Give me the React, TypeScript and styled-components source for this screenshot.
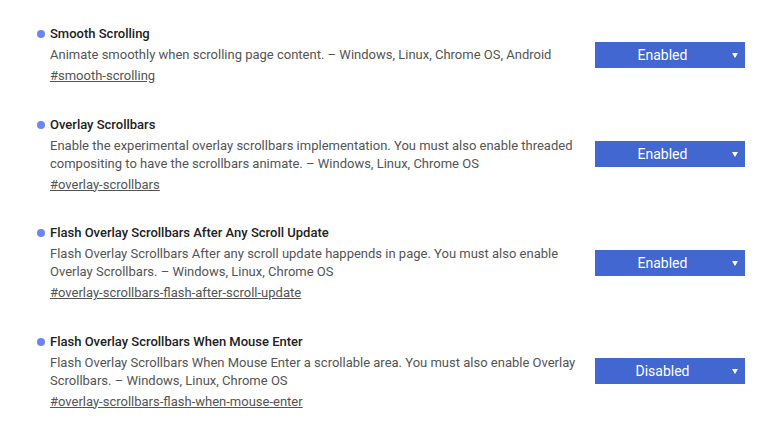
import React from "react";
import styled, { createGlobalStyle } from "styled-components";

const Global = createGlobalStyle`
  html, body { margin: 0; padding: 0; background: #ffffff; }
  body { font-family: Roboto, "Noto Sans", Arial, sans-serif; }
`;

const List = styled.div`
  display: flex;
  flex-direction: column;
  gap: 29.5px;
  padding: 24px 39px 0 37px;
`;

const Experiment = styled.div`
  display: flex;
  align-items: center;
  justify-content: space-between;
`;

const Info = styled.div`
  display: flex;
  flex-direction: column;
  width: 545px;
`;

const Title = styled.div`
  display: flex;
  align-items: center;
  gap: 5px;
  font-size: 13px;
  font-weight: 500;
  line-height: 20px;
  color: #212121;
  margin-bottom: 2px;
`;

const Dot = styled.span`
  width: 8px;
  height: 8px;
  border-radius: 50%;
  background: #6b86f2;
  flex: none;
`;

const Description = styled.p`
  margin: 0 0 0 13px;
  font-size: 13px;
  line-height: 18px;
  color: #545454;
`;

const Permalink = styled.a`
  margin: 3px 0 0 13px;
  font-size: 13px;
  line-height: 18px;
  color: #545454;
  text-decoration: underline;
  align-self: flex-start;
`;

const Select = styled.div`
  position: relative;
  box-sizing: border-box;
  width: 150px;
  height: 26px;
  padding-right: 15px;
  background: #4267d0;
  color: #ffffff;
  font-size: 14px;
  display: flex;
  align-items: center;
  justify-content: center;
  flex: none;
`;

const Arrow = styled.span`
  position: absolute;
  right: 7px;
  top: 11px;
  width: 0;
  height: 0;
  border-left: 3px solid transparent;
  border-right: 3px solid transparent;
  border-top: 5px solid #ffffff;
`;

type Flag = { name: string; desc: string; link: string; value: string };

const flags: Flag[] = [
  {
    name: "Smooth Scrolling",
    desc: "Animate smoothly when scrolling page content. – Windows, Linux, Chrome OS, Android",
    link: "#smooth-scrolling",
    value: "Enabled",
  },
  {
    name: "Overlay Scrollbars",
    desc: "Enable the experimental overlay scrollbars implementation. You must also enable threaded compositing to have the scrollbars animate. – Windows, Linux, Chrome OS",
    link: "#overlay-scrollbars",
    value: "Enabled",
  },
  {
    name: "Flash Overlay Scrollbars After Any Scroll Update",
    desc: "Flash Overlay Scrollbars After any scroll update happends in page. You must also enable Overlay Scrollbars. – Windows, Linux, Chrome OS",
    link: "#overlay-scrollbars-flash-after-scroll-update",
    value: "Enabled",
  },
  {
    name: "Flash Overlay Scrollbars When Mouse Enter",
    desc: "Flash Overlay Scrollbars When Mouse Enter a scrollable area. You must also enable Overlay Scrollbars. – Windows, Linux, Chrome OS",
    link: "#overlay-scrollbars-flash-when-mouse-enter",
    value: "Disabled",
  },
];

export default function App() {
  return (
    <>
      <Global />
      <List>
        {flags.map((f) => (
          <Experiment key={f.link}>
            <Info>
              <Title>
                <Dot />
                {f.name}
              </Title>
              <Description>{f.desc}</Description>
              <Permalink href={f.link}>{f.link}</Permalink>
            </Info>
            <Select>
              {f.value}
              <Arrow />
            </Select>
          </Experiment>
        ))}
      </List>
    </>
  );
}
